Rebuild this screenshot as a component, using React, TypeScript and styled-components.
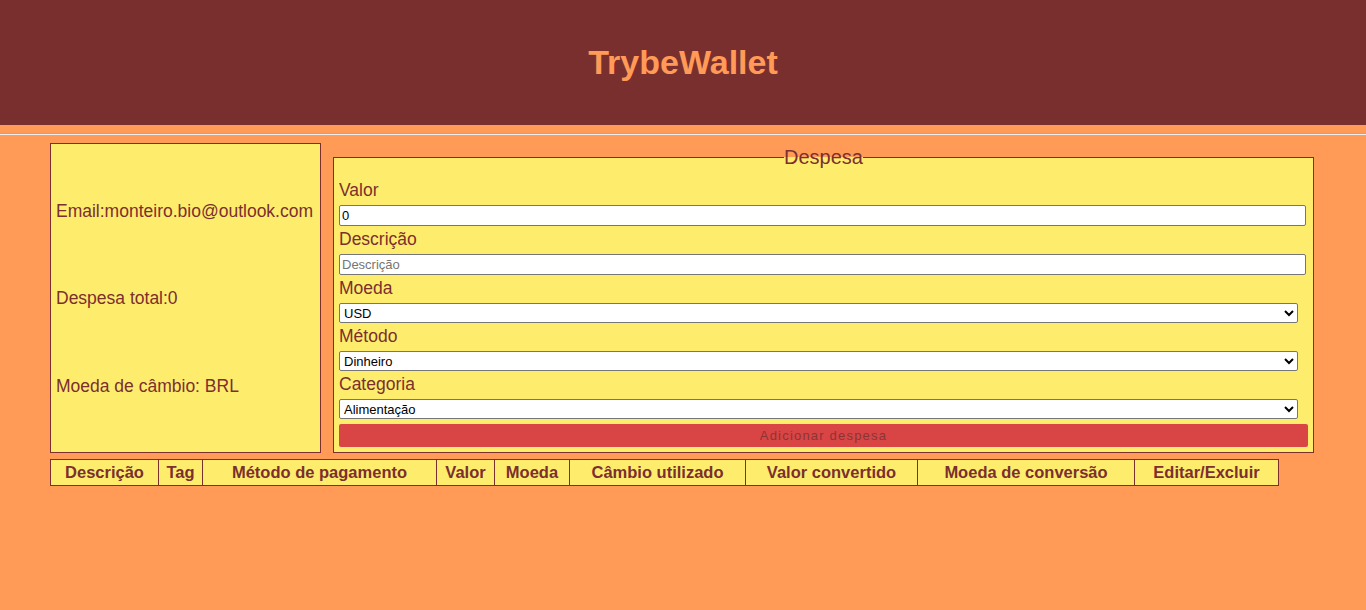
import React from "react";
import styled, { createGlobalStyle } from "styled-components";

const Global = createGlobalStyle`
  html, body { margin: 0; padding: 0; }
  body { background: #ff9a57; font-family: "Liberation Sans", Arial, sans-serif; }
`;

const brown = "#7b2f2f";
const yellow = "#feed6d";

const Header = styled.header`
  height: 125px;
  background: #7a2f2f;
  display: flex;
  align-items: center;
  justify-content: center;
`;

const Title = styled.h1`
  margin: 0;
  color: #ff9a57;
  font-size: 34px;
  font-weight: 700;
  font-family: "Liberation Sans", Arial, sans-serif;
`;

const Rule = styled.hr`
  margin: 8px 0;
  border: 0;
  border-top: 1px solid #a9a9a9;
  border-bottom: 1px solid #eeeeee;
`;

const Main = styled.main`
  padding: 0 50px;
`;

const Top = styled.div`
  display: flex;
  gap: 12px;
  align-items: stretch;
`;

const InfoBox = styled.section`
  box-sizing: border-box;
  flex: 0 0 271px;
  height: 310px;
  background: ${yellow};
  border: 1px solid ${brown};
  display: flex;
  flex-direction: column;
  justify-content: space-evenly;
  padding: 0 5px;
`;

const InfoLine = styled.p`
  margin: 0;
  color: ${brown};
  font-size: 17.5px;
  line-height: 42px;
  white-space: nowrap;
`;

const Fieldset = styled.fieldset`
  margin: 0;
  box-sizing: border-box;
  flex: 0 0 981px;
  background: ${yellow};
  border: 1px solid ${brown};
  padding: 0 5px 5px 5px;
  display: flex;
  flex-direction: column;
`;

const Legend = styled.legend`
  margin: 0 auto;
  padding: 0;
  color: ${brown};
  font-size: 20px;
  line-height: 28px;
`;

const Label = styled.label<{ $first?: boolean }>`
  display: block;
  color: ${brown};
  font-size: 17.5px;
  line-height: 24px;
  margin-top: ${(p) => (p.$first ? "7px" : "0")};
`;

const TextInput = styled.input`
  display: block;
  box-sizing: border-box;
  width: calc(100% - 2px);
  height: 21px;
  margin: 3px 0 1px;
  font-family: Arial, "Liberation Sans", sans-serif;
  font-size: 13px;
  padding: 1px 2px;
  border: 1px solid #767676;
  border-radius: 2px;
  background: #fff;
  &::placeholder { color: #757575; }
`;

const Select = styled.select`
  display: block;
  box-sizing: border-box;
  width: calc(100% - 10px);
  height: 20px;
  margin: 3px 0 1px;
  font-family: Arial, "Liberation Sans", sans-serif;
  font-size: 13px;
  border: 1px solid #767676;
  border-radius: 2px;
  background: #fff;
  color: #000;
`;

const AddButton = styled.button`
  margin-top: 4px;
  height: 23px;
  width: 100%;
  background: #d94545;
  border: none;
  border-radius: 2px;
  color: #8c3434;
  font-family: Arial, "Liberation Sans", sans-serif;
  font-size: 13px;
  letter-spacing: 1.2px;
`;

const Table = styled.table`
  margin-top: 6px;
  border-collapse: collapse;
  background: ${yellow};
`;

const Th = styled.th<{ $w: number }>`
  width: ${(p) => p.$w}px;
  box-sizing: border-box;
  height: 26px;
  padding: 0;
  border: 1px solid ${brown};
  color: ${brown};
  font-size: 16.5px;
  font-weight: 700;
  font-family: "Liberation Sans", Arial, sans-serif;
  white-space: nowrap;
`;

const columns: [string, number][] = [
  ["Descrição", 108],
  ["Tag", 44],
  ["Método de pagamento", 234],
  ["Valor", 58],
  ["Moeda", 75],
  ["Câmbio utilizado", 176],
  ["Valor convertido", 172],
  ["Moeda de conversão", 217],
  ["Editar/Excluir", 144],
];

export default function App() {
  return (
    <>
      <Global />
      <Header>
        <Title>TrybeWallet</Title>
      </Header>
      <Rule />
      <Main>
        <Top>
          <InfoBox>
            <InfoLine>Email:monteiro.bio@outlook.com</InfoLine>
            <InfoLine>Despesa total:0</InfoLine>
            <InfoLine>Moeda de câmbio: BRL</InfoLine>
          </InfoBox>
          <Fieldset>
            <Legend>Despesa</Legend>
            <Label $first htmlFor="valor">Valor</Label>
            <TextInput id="valor" type="text" defaultValue="0" />
            <Label htmlFor="descricao">Descrição</Label>
            <TextInput id="descricao" type="text" placeholder="Descrição" />
            <Label htmlFor="moeda">Moeda</Label>
            <Select id="moeda" defaultValue="USD">
              <option>USD</option>
            </Select>
            <Label htmlFor="metodo">Método</Label>
            <Select id="metodo" defaultValue="Dinheiro">
              <option>Dinheiro</option>
            </Select>
            <Label htmlFor="categoria">Categoria</Label>
            <Select id="categoria" defaultValue="Alimentação">
              <option>Alimentação</option>
            </Select>
            <AddButton type="button">Adicionar despesa</AddButton>
          </Fieldset>
        </Top>
        <Table>
          <thead>
            <tr>
              {columns.map(([name, w]) => (
                <Th key={name} $w={w}>{name}</Th>
              ))}
            </tr>
          </thead>
        </Table>
      </Main>
    </>
  );
}
